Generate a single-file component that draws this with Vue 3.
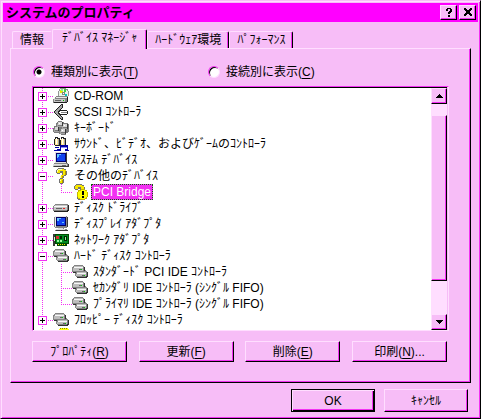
<template>
  <main class="window">
    <svg class="sprites" aria-hidden="true">
      <symbol id="cdrom" viewBox="0 0 16 16">
        <path d="M7 0h6v1h2v2h1v5h-1v2H7V8H5V3h1V1h1z" fill="#949494" />
        <path d="M7 1h6v1h1v1h1v5h-1v1H7V8H6V3h1z" fill="#e8f8e8" />
        <path d="M7 2h3v3H7z" fill="#e7e700" />
        <path d="M8 1h2v2H8z" fill="#8cf08c" />
        <path d="M12 6h2v2h-2z" fill="#00c8c8" />
        <path d="M11 1h2v3h-2z" fill="#42d642" />
        <path d="M9 4h3v3H9z" fill="#848484" />
        <path d="M10 5h1v1h-1z" fill="#fff" />
        <path d="M3 8h11v1h1v5h-1v1H0v-4h1v-1h1V9h1z" fill="#848484" />
        <path d="M3 9h11v1H2v1H1v-1h2z" fill="#e7e7e7" />
        <path d="M1 11h11v3H1z" fill="#c6c6c6" />
        <path d="M2 12h6v1H2z" fill="#636363" />
        <path d="M10 12h1v1h-1z" fill="#00c000" />
        <path d="M1 14h13V9h1v5h-1v1H1z" fill="#212121" />
      </symbol>
      <symbol id="scsi" viewBox="0 0 16 16">
        <path d="M8 0h2v4H9v1H8v1h6v1h1v3h-1v1H8v1h1v1h1v3H8v-1H7v-1H6v-1H5v-1H4v-1H3v-1H2V9H1V7h1V6h1V5h1V4h1V3h1V2h1V1h1z" fill="#212121" />
        <path d="M8 1h1v3H8v1H7v1H6v1H5v3h1v1h1v1h1v1h1v2H8v-1H7v-1H6v-1H5v-1H4v-1H3V9H2V7h1V6h1V5h1V4h1V3h1V2h1z" fill="#a5a5a5" />
        <path d="M7 7h7v3H7V9H6V8h1z" fill="#fff" />
        <path d="M8 8h6v1H8z" fill="#848484" />
      </symbol>
      <symbol id="keyboard" viewBox="0 0 16 16">
        <path d="M5 1h4v1h2v1h4v1h1v8h-1v1h-2v2H8v-1H6v-1H1v-1H0V8h1V6h2V3h1V2h1z" fill="#7b7b7b" />
        <path d="M5 2h4v3H5zM10 4h4v3h-4zM2 7h3v3H2zM8 9h4v3H8z" fill="#d6d6d6" />
        <path d="M4 4h1v2h4v1H4zM9 6h1v2h4v1H9zM1 9h1v2h4v1H1zM7 11h1v2h4v1H7z" fill="#a5a5a5" />
        <path d="M9 2h1v4H9zM14 4h1v5h-1zM5 7h1v4H5zM12 9h1v5h-1z" fill="#393939" />
        <path d="M6 3h1v1H6zM11 5h1v1h-1zM9 10h1v1H9z" fill="#fff" />
      </symbol>
      <symbol id="sound" viewBox="0 0 16 16">
        <path d="M2 1h3v1h2v2h1V1h3v1h2v8H8V9H7v1H2V9H1V3h1z" fill="#212121" />
        <path d="M2 3h3v6H2zM8 3h3v6H8z" fill="#ffe794" />
        <path d="M3 2h1v6H3zM9 2h1v6H9z" fill="#fff" />
        <path d="M5 3h1v6H5zM11 3h1v6h-1z" fill="#a5a5a5" />
        <path d="M6 9h9v6h-3v-2h2v-2H8v4H4v-2h3V9z" fill="#0000a5" />
        <path d="M8 11h6v1H8z" fill="#8c8cff" />
        <path d="M2 11h4v1H2zM1 14h3v1H1zM15 14h1v1h-1z" fill="#0000a5" />
      </symbol>
      <symbol id="computer" viewBox="0 0 16 16">
        <path d="M2 0h12v11h1v1h1v3H0v-3h1v-1h1z" fill="#848484" />
        <path d="M2 0h11v1H3v9h10v1H2zM2 12h12v1H1v1H0v-2h2z" fill="#dedede" />
        <path d="M13 1h1v10h-1zM15 12h1v3H1v-1h14z" fill="#393939" />
        <path d="M3 1h10v9H3z" fill="#000073" />
        <path d="M4 2h8v7H4z" fill="#1042ef" />
        <path d="M4 2h4v1H6v2H5v1H4z" fill="#63c6ff" />
        <path d="M1 13h13v1H1z" fill="#c6c6c6" />
        <path d="M9 13h4v1H9z" fill="#636363" />
      </symbol>
      <symbol id="unknown" viewBox="0 0 16 16">
        <path d="M5 0h6v1h2v2h1v4h-1v1h-2v2h-1v1h1v4h-1v1H7v-1H6v-4h1V8h1V7h1V5H7v1H4V5H3V2h1V1h1z" fill="#737373" />
        <path d="M5 1h6v1h2v5h-2v1h-1v2H7V8h1V7h2V3H7v2H4V2h1zM7 11h3v4H7z" fill="#f7e700" />
        <path d="M5 1h4v1H5v2H4V2h1zM7 8h1v2H7zM7 12h1v1H7z" fill="#ffffb5" />
        <path d="M12 3h1v4h-1zM9 12h1v3H9zM9 8h1v2H9z" fill="#b59400" />
      </symbol>
      <symbol id="warning" viewBox="0 0 16 16">
        <path d="M4 0h6v1h2v2h1v4h-1v1h-2v2H9v1h1v4H9v1H6v-1H5v-4h1V8h1V7h1V5H6v1H3V5H2V2h1V1h1z" fill="#737373" />
        <path d="M4 1h6v1h2v5h-2v1H9v2H6V8h1V7h2V3H6v2H3V2h1z" fill="#f7e700" />
        <path d="M9 5h4v1h2v2h1v5h-1v2h-2v1H8v-1H6v-2H5V8h1V6h3z" fill="#c6b500" />
        <path d="M9 6h4v1h2v6h-1v1h-1v1H8v-1H6V8h1V7h2z" fill="#ffff00" />
        <path d="M10 7h2v4h-2zM10 12h2v2h-2z" fill="#000" />
      </symbol>
      <symbol id="drive" viewBox="0 0 16 16">
        <path d="M2 4h13v1h1v5h-1v2H1v-1H0V6h1V5h1z" fill="#848484" />
        <path d="M2 5h12v1H2zM1 7h13v3H1z" fill="#c6c6c6" />
        <path d="M1 6h13v1H1z" fill="#f7f7f7" />
        <path d="M3 8h6v1H3z" fill="#636363" />
        <path d="M10 8h2v1h-2z" fill="#e72121" />
        <path d="M1 11h13v-1h1V5h1v6h-1v1H1z" fill="#212121" />
      </symbol>
      <symbol id="display" viewBox="0 0 16 16">
        <path d="M2 0h12v1h1v10h-1v1h-3v1h3v1h1v1H2v-1h1v-1h2v-1H2v-1H1V1h1z" fill="#848484" />
        <path d="M2 0h11v1H3v10H2z" fill="#e7e7e7" />
        <path d="M3 1h10v9H3z" fill="#000063" />
        <path d="M4 2h8v7H4z" fill="#1042ef" />
        <path d="M4 2h4v1H6v2H4zM9 6h2v1H9z" fill="#63c6ff" />
        <path d="M5 12h5v1H5zM3 13h9v1H3z" fill="#dedede" />
        <path d="M3 14h12v1H3zM14 1h1v10h-1z" fill="#393939" />
      </symbol>
      <symbol id="network" viewBox="0 0 16 16">
        <path d="M0 2h16v10h-2v2H4v-2H2v2H0z" fill="#004a00" />
        <path d="M3 3h12v8H3z" fill="#008c21" />
        <path d="M0 2h2v12H0z" fill="#393939" />
        <path d="M1 5h1v4H1z" fill="#e7e7e7" />
        <path d="M3 4h3v3H3z" fill="#d63131" />
        <path d="M7 4h2v3H7zM11 4h3v5h-3z" fill="#002100" />
        <path d="M4 8h2v2H4zM7 8h2v2H7zM12 5h1v3h-1z" fill="#9cf79c" />
        <path d="M5 12h1v1H5zM7 12h1v1H7zM9 12h1v1H9zM11 12h1v1h-1z" fill="#f7e700" />
      </symbol>
      <symbol id="controller" viewBox="0 0 16 16">
        <path d="M2 1h9v1h1v1h1v3h1v1h1v1h1v5h-1v1H5v-1H4v-1H3V9H1V8H0V3h1V2h1z" fill="#848484" />
        <path d="M2 2h9v1H2zM1 4h10v3H1zM5 8h9v1H5zM4 10h10v2H4z" fill="#bdbdbd" />
        <path d="M2 3h9v1H2zM5 9h9v1H5z" fill="#f7f7f7" />
        <path d="M7 5h3v1H7zM10 11h3v1h-3z" fill="#636363" />
        <path d="M9 5h1v1H9zM12 11h1v1h-1z" fill="#00d600" />
        <path d="M1 8h3v1H1zM12 3h1v4h-1zM5 13h9v-1h1V8h1v5h-1v1H5z" fill="#313131" />
      </symbol>
      <symbol id="partial" viewBox="0 0 16 16">
        <path d="M7 0h8v1h1v4H6V1h1z" fill="#ffff00" />
        <path d="M7 0h1v1H7zM9 0h1v1H9zM11 0h1v1h-1zM13 0h1v1h-1z" fill="#848400" />
      </symbol>
    </svg>

    <header class="title-bar">
      <h1>システムのプロパティ</h1>
      <button class="raised caption" type="button" aria-label="ヘルプ">
        <svg viewBox="0 0 10 9"><path d="M3 0h4v1h1v3H7v1H6v1H4V4h1V3h1V1H4v2H2V1h1zM4 7h2v2H4z" /></svg>
      </button>
      <button class="raised caption" type="button" aria-label="閉じる">
        <svg viewBox="0 0 10 9"><path d="M1 0h2v1h1v1h2V1h1V0h2v2H8v1H7v2h1v1h1v2H7V7H6V6H4v1H3v1H1V6h1V5h1V3H2V2H1z" /></svg>
      </button>
    </header>

    <div class="body">
      <nav class="tabs" role="tablist">
        <button
          v-for="(tab, index) in tabs"
          :key="tab"
          class="tab"
          :class="{ active: index === activeTab, before: index < activeTab }"
          type="button"
          role="tab"
          :aria-selected="index === activeTab"
          @click="activeTab = index">
          {{ tab }}
        </button>
      </nav>

      <section class="panel">
        <div class="views">
          <label><input v-model="view" type="radio" name="view" value="type" />種類別に表示(<u>T</u>)</label>
          <label><input v-model="view" type="radio" name="view" value="connection" />接続別に表示(<u>C</u>)</label>
        </div>

        <div class="list">
          <ul class="tree" role="tree">
            <li v-for="(row, index) in rows" :key="index" class="row" role="treeitem">
              <span v-if="row.child" class="guide"></span>
              <span class="guide branch" :class="{ last: row.last }">
                <button
                  v-if="row.box"
                  class="expander"
                  :class="{ closed: row.box === '+' }"
                  type="button"
                  :aria-label="row.box === '+' ? '展開' : '折りたたむ'"></button>
              </span>
              <svg class="icon"><use :href="'#' + row.icon" /></svg>
              <span class="name" :class="{ selected: row.selected }">{{ row.name }}</span>
            </li>
          </ul>
          <div class="scrollbar">
            <button class="raised arrow" type="button" aria-label="上へ">
              <svg viewBox="0 0 7 4"><path d="M3 0h1v1h1v1h1v1h1v1H0V3h1V2h1V1h1z" /></svg>
            </button>
            <div class="track">
              <div class="raised thumb"></div>
            </div>
            <button class="raised arrow" type="button" aria-label="下へ">
              <svg viewBox="0 0 7 4"><path d="M0 0h7v1H6v1H5v1H4v1H3V3H2V2H1V1H0z" /></svg>
            </button>
          </div>
        </div>

        <div class="actions">
          <button
            v-for="action in actions"
            :key="action.key"
            class="raised action"
            type="button">
            {{ action.name }}(<u>{{ action.key }}</u>){{ action.suffix }}
          </button>
        </div>
      </section>
    </div>

    <footer class="footer">
      <button class="raised default" type="button">OK</button>
      <button class="raised" type="button">ｷｬﾝｾﾙ</button>
    </footer>
  </main>
</template>

<script setup>
import { ref } from 'vue';

const tabs = ['情報', 'ﾃﾞﾊﾞｲｽ ﾏﾈｰｼﾞｬ', 'ﾊｰﾄﾞｳｪｱ環境', 'ﾊﾟﾌｫｰﾏﾝｽ'];
const activeTab = ref(1);
const view = ref('type');

const rows = [
  { name: 'CD-ROM', icon: 'cdrom', box: '+' },
  { name: 'SCSI ｺﾝﾄﾛｰﾗ', icon: 'scsi', box: '+' },
  { name: 'ｷｰﾎﾞｰﾄﾞ', icon: 'keyboard', box: '+' },
  { name: 'ｻｳﾝﾄﾞ、ﾋﾞﾃﾞｵ、およびｹﾞｰﾑのｺﾝﾄﾛｰﾗ', icon: 'sound', box: '+' },
  { name: 'ｼｽﾃﾑ ﾃﾞﾊﾞｲｽ', icon: 'computer', box: '+' },
  { name: 'その他のﾃﾞﾊﾞｲｽ', icon: 'unknown', box: '-' },
  { name: 'PCI Bridge', icon: 'warning', child: true, last: true, selected: true },
  { name: 'ﾃﾞｨｽｸ ﾄﾞﾗｲﾌﾞ', icon: 'drive', box: '+' },
  { name: 'ﾃﾞｨｽﾌﾟﾚｲ ｱﾀﾞﾌﾟﾀ', icon: 'display', box: '+' },
  { name: 'ﾈｯﾄﾜｰｸ ｱﾀﾞﾌﾟﾀ', icon: 'network', box: '+' },
  { name: 'ﾊｰﾄﾞ ﾃﾞｨｽｸ ｺﾝﾄﾛｰﾗ', icon: 'controller', box: '-' },
  { name: 'ｽﾀﾝﾀﾞｰﾄﾞ PCI IDE ｺﾝﾄﾛｰﾗ', icon: 'controller', child: true },
  { name: 'ｾｶﾝﾀﾞﾘ IDE ｺﾝﾄﾛｰﾗ (ｼﾝｸﾞﾙ FIFO)', icon: 'controller', child: true },
  { name: 'ﾌﾟﾗｲﾏﾘ IDE ｺﾝﾄﾛｰﾗ (ｼﾝｸﾞﾙ FIFO)', icon: 'controller', child: true, last: true },
  { name: 'ﾌﾛｯﾋﾟｰ ﾃﾞｨｽｸ ｺﾝﾄﾛｰﾗ', icon: 'controller', box: '+' },
  { name: '', icon: 'partial' },
];

const actions = [
  { name: 'ﾌﾟﾛﾊﾟﾃｨ', key: 'R' },
  { name: '更新', key: 'F' },
  { name: '削除', key: 'E' },
  { name: '印刷', key: 'N', suffix: '...' },
];
</script>

<style>
body {
  margin: 0;
}
</style>

<style scoped>
.window {
  --face: #f7bdf7;
  --light: #ffdeff;
  --dark: #f231f2;
  display: flex;
  flex-direction: column;
  box-sizing: border-box;
  height: 100vh;
  padding: 2px;
  border: 1px solid;
  border-color: var(--face) #000 #000 var(--face);
  background: var(--face);
  box-shadow: inset 1px 1px var(--light), inset -1px -1px var(--dark);
  color: #000;
  font: 12px/16px "Liberation Sans", "Noto Sans CJK JP", sans-serif;
  white-space: nowrap;
}

.sprites {
  display: none;
}

svg {
  fill: #000;
  shape-rendering: crispEdges;
}

button {
  padding: 0;
  border: 0;
  background: var(--face);
  color: inherit;
  font: inherit;
}

u {
  text-underline-offset: 2px;
}

.raised {
  box-sizing: border-box;
  border: 1px solid;
  border-color: var(--light) #000 #000 var(--light);
  background: var(--face);
  box-shadow: inset -1px -1px var(--dark);
}

.title-bar {
  display: flex;
  align-items: center;
  gap: 2px;
  height: 19px;
  padding: 0 2px 0 3px;
  background: #ff00ff;
}

.title-bar h1 {
  flex: 1;
  margin: 0;
  font-size: 13px;
  font-weight: bold;
  line-height: 19px;
}

.caption {
  display: flex;
  align-items: center;
  justify-content: center;
  width: 17px;
  height: 15px;
}

.caption svg {
  width: 10px;
  height: 9px;
}

.body {
  display: flex;
  flex: 1;
  flex-direction: column;
  min-height: 0;
  padding: 7px 7px 0;
}

.tabs {
  display: flex;
  align-items: flex-end;
  height: 19px;
  padding-left: 2px;
}

.tab {
  box-sizing: border-box;
  height: 17px;
  padding: 0 7px;
  border: 1px solid;
  border-color: var(--light) #000 transparent var(--light);
  border-bottom: 0;
  border-radius: 2px 2px 0 0;
  box-shadow: inset -1px 0 var(--dark);
}

.tab.before {
  border-right-color: var(--face);
  box-shadow: none;
}

.tab.active {
  z-index: 1;
  height: 20px;
  margin-bottom: -1px;
  padding: 0 9px 3px;
}

.panel {
  display: flex;
  flex: 1;
  flex-direction: column;
  min-height: 0;
  padding: 14px 21px 20px;
  border: 1px solid;
  border-color: var(--light) #000 #000 var(--light);
  box-shadow: inset -1px -1px var(--dark);
}

.views {
  display: grid;
  grid-template-columns: 175px 1fr;
  padding: 0 0 5px 1px;
  line-height: 18px;
}

.views label {
  display: flex;
  align-items: center;
}

.views input {
  width: 12px;
  height: 12px;
  margin: 0 6px 0 0;
  border: 1px solid;
  border-color: var(--dark) var(--light) var(--light) var(--dark);
  border-radius: 50%;
  appearance: none;
  background: #fff;
  box-shadow: inset 1px 1px #000;
}

.views input:checked {
  background: radial-gradient(circle, #000 2px, #fff 3px);
}

.list {
  display: flex;
  flex: 1;
  min-height: 0;
  padding-right: 1px;
  border: 1px solid;
  border-color: var(--dark) var(--light) var(--light) var(--dark);
  background: var(--face);
}

.tree {
  flex: 1;
  margin: 0;
  padding: 0;
  overflow: hidden;
  border: solid #000;
  border-width: 1px 0 0 1px;
  background: #fff;
  list-style: none;
}

.row {
  display: flex;
  height: 16px;
}

.guide {
  width: 19px;
  background: repeating-linear-gradient(var(--dark) 0 1px, transparent 1px 2px) 8px 0 / 1px 100% no-repeat;
}

.branch {
  background:
    repeating-linear-gradient(var(--dark) 0 1px, transparent 1px 2px) 8px 0 / 1px 100% no-repeat,
    repeating-linear-gradient(90deg, var(--dark) 0 1px, transparent 1px 2px) 8px 8px / 11px 1px no-repeat;
}

.branch.last {
  background-size: 1px 8px, 11px 1px;
}

.expander {
  display: block;
  box-sizing: border-box;
  width: 9px;
  height: 9px;
  margin: 4px;
  border: 1px solid var(--dark);
  background: linear-gradient(#000, #000) center / 5px 1px no-repeat, #fff;
}

.expander.closed {
  background:
    linear-gradient(#000, #000) center / 5px 1px no-repeat,
    linear-gradient(#000, #000) center / 1px 5px no-repeat,
    #fff;
}

.icon {
  width: 16px;
  height: 16px;
}

.name {
  margin-left: 3px;
  padding: 0 2px;
}

.name.selected {
  padding: 0 1px;
  border: 1px dotted #086308;
  background: var(--dark);
  color: #fff;
  line-height: 14px;
}

.scrollbar {
  display: flex;
  flex-direction: column;
  width: 16px;
  border-top: 1px solid #000;
  background: var(--light);
}

.arrow {
  display: flex;
  align-items: center;
  justify-content: center;
  height: 16px;
}

.arrow svg {
  width: 7px;
  height: 4px;
}

.track {
  display: flex;
  flex: 1;
  flex-direction: column;
}

.track::before {
  flex: 1;
  content: "";
}

.track::after {
  flex: 3;
  content: "";
}

.thumb {
  flex: 15;
}

.actions {
  display: flex;
  justify-content: space-between;
  margin-top: 10px;
  padding-right: 2px;
}

.action {
  width: 95px;
  height: 21px;
}

.footer {
  display: flex;
  justify-content: flex-end;
  gap: 9px;
  padding: 6px 10px 4px;
}

.footer button {
  width: 84px;
  height: 23px;
}

.footer .default {
  border-color: #000;
  box-shadow: inset 1px 1px var(--light), inset -1px -1px #000, inset -2px -2px var(--dark);
}
</style>
